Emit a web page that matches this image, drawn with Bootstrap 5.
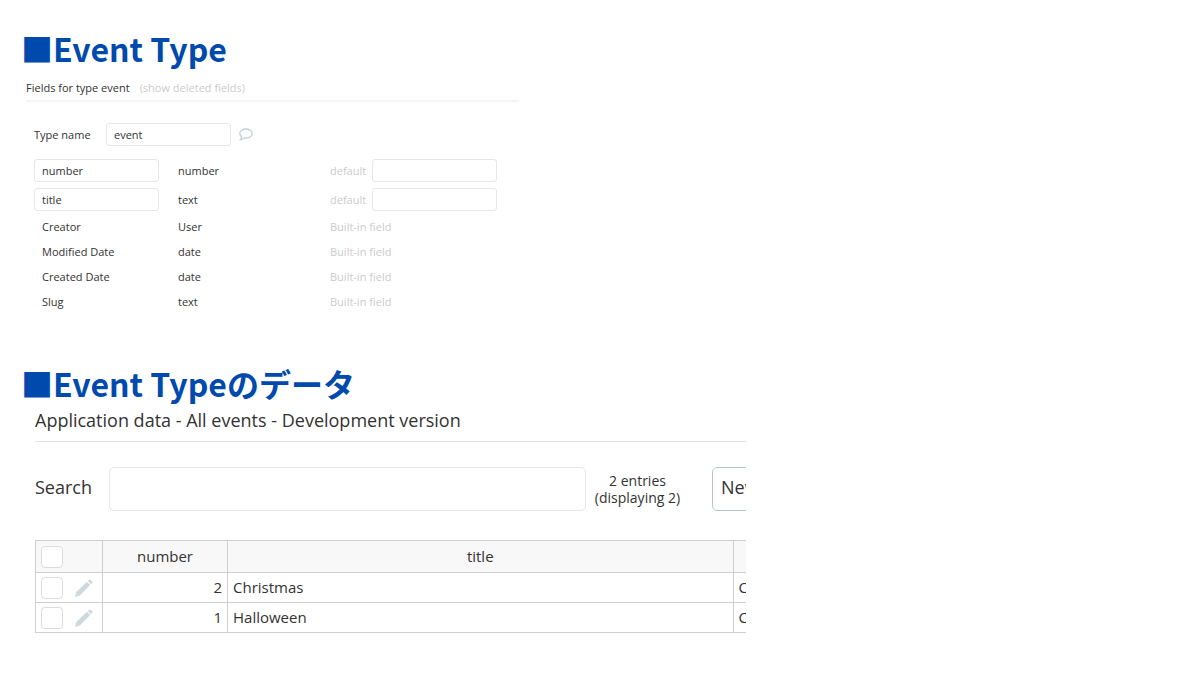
<!DOCTYPE html>
<html lang="ja">
<head>
<meta charset="utf-8">
<meta name="viewport" content="width=device-width, initial-scale=1">
<title>Event Type</title>
<link href="https://cdn.jsdelivr.net/npm/bootstrap@5.3.0/dist/css/bootstrap.min.css" rel="stylesheet">
<style>
  body { font-family: "Open Sans", "Noto Sans CJK JP", sans-serif; font-size: 11px; line-height: 16px; color: #333; background: #fff; }
  .page { padding: 25px 20px 40px 21px; }
  .section-title { font-family: "Noto Sans CJK JP", sans-serif; font-weight: 700; font-size: 32px; line-height: 46px; color: #004aad; }

  .type-panel { max-width: 493px; margin-left: 5px; }
  .type-head { padding: 9px 0 4px; border-bottom: 2px solid #f4f4f4; gap: 10px; }
  .type-body { padding: 21px 22px 0 8px; }
  .faded, .faded:hover { color: #cbcbcb; text-decoration: none; }
  .box { border: 1px solid #e6e6e6; border-radius: 3px; color: #333; background: #fff; }
  .box-sm { width: 125px; height: 23px; padding: 0 7px; font-size: 11px; line-height: 16px; }
  .name-label { width: 72px; }
  .fields { width: 100%; margin-top: 10px; table-layout: fixed; }
  .fields td { height: 25px; padding: 0; vertical-align: middle; }
  .fields .editable td { height: 29px; }
  .fields .fixed-name { padding-left: 8px; }
  .col-field { width: 144px; }
  .col-type { width: 152px; }

  .data-section { margin-top: 46px; }
  .data-panel { max-width: 711px; margin-left: 14px; padding-top: 2px; overflow: hidden; font-size: 15px; line-height: 17px; }
  .data-title { font-size: 18px; line-height: 24px; padding-bottom: 9px; border-bottom: 1px solid #e2e2e2; }
  .search-row { padding: 25px 0 29px; }
  .search-label { font-size: 18px; width: 74px; line-height: 24px; padding-bottom: 4px; }
  .search-box { height: 44px; flex: 1 1 0; min-width: 0; border-radius: 5px; }
  .entry-count { width: 103px; margin-right: 23px; font-size: 14px; }
  .new-clip { width: 34px; overflow: hidden; }
  .new-btn { width: 80px; height: 44px; padding: 0 8px 4px; font-size: 18px; text-align: left; border: 1px solid #b9c5cb; border-radius: 5px; background: #fff; color: #333; }
  .entries { width: 100%; table-layout: fixed; border-collapse: collapse; }
  .entries th, .entries td { height: 30px; padding: 0 5px; border: 1px solid #cfcfcf; font-weight: 400; vertical-align: middle; }
  .entries th { height: 32px; background: #f8f8f8; text-align: center; }
  .entries th:last-child, .entries td:last-child { border-right: 0; overflow: hidden; }
  .col-tools { width: 67px; }
  .col-number { width: 125px; }
  .col-cut { width: 13px; }
  .tick { appearance: none; display: block; width: 22px; height: 22px; margin: 0; border: 1px solid #dcdcdc; border-radius: 4px; background: #fff; }
</style>
</head>
<body>
<main class="page">
  <section>
    <h1 class="section-title mb-0">■Event Type</h1>
    <div class="type-panel">
      <div class="type-head d-flex"><span>Fields for type event</span><a href="#" class="faded">(show deleted fields)</a></div>
      <div class="type-body">
        <div class="d-flex align-items-center">
          <label for="type-name" class="name-label">Type name</label>
          <input id="type-name" class="box box-sm" type="text" value="event">
          <svg class="ms-2" width="14" height="13" viewBox="0 0 14 13" fill="none" stroke="#c3d0d6" stroke-width="1.3" role="img" aria-label="Comment"><path d="M7 1C3.500 1 .8 2.900.8 5.500c0 1.500.8 2.600 1.900 3.400C2.600 10 2.100 11 1.300 11.900c1.700-.2 3-.9 3.900-2 4.500.6 8-1.400 8-4.400C13.200 2.900 10.500 1 7 1z"/></svg>
        </div>
        <table class="fields">
          <colgroup><col class="col-field"><col class="col-type"><col></colgroup>
          <tbody>
            <tr class="editable"><td><input class="box box-sm" type="text" value="number" aria-label="Field name"></td><td>number</td><td><div class="d-flex align-items-center justify-content-between faded"><label for="default-number">default</label><input id="default-number" class="box box-sm" type="text"></div></td></tr>
            <tr class="editable"><td><input class="box box-sm" type="text" value="title" aria-label="Field name"></td><td>text</td><td><div class="d-flex align-items-center justify-content-between faded"><label for="default-title">default</label><input id="default-title" class="box box-sm" type="text"></div></td></tr>
            <tr><td class="fixed-name">Creator</td><td>User</td><td class="faded">Built-in field</td></tr>
            <tr><td class="fixed-name">Modified Date</td><td>date</td><td class="faded">Built-in field</td></tr>
            <tr><td class="fixed-name">Created Date</td><td>date</td><td class="faded">Built-in field</td></tr>
            <tr><td class="fixed-name">Slug</td><td>text</td><td class="faded">Built-in field</td></tr>
          </tbody>
        </table>
      </div>
    </div>
  </section>

  <section class="data-section">
    <h1 class="section-title mb-0">■Event Typeのデータ</h1>
    <div class="data-panel">
      <h2 class="data-title fw-normal mb-0">Application data - All events - Development version</h2>
      <div class="search-row d-flex align-items-center">
        <label for="search" class="search-label">Search</label>
        <input id="search" class="box search-box" type="text">
        <div class="entry-count text-center">2 entries<br>(displaying 2)</div>
        <div class="new-clip"><button type="button" class="new-btn">New</button></div>
      </div>
      <table class="entries">
        <colgroup><col class="col-tools"><col class="col-number"><col><col class="col-cut"></colgroup>
        <thead>
          <tr><th><input class="tick" type="checkbox" aria-label="Select all"></th><th>number</th><th>title</th><th></th></tr>
        </thead>
        <tbody>
          <tr><td><div class="d-flex align-items-center justify-content-between"><input class="tick" type="checkbox" aria-label="Select Christmas"><svg class="me-1" width="18" height="18" viewBox="0 0 18 18" fill="#cfd8dc" role="img" aria-label="Edit"><path d="M0 18l1.300-5L12 2.800l3.200 3.200L4.800 16.500z"/><path d="M12.700 2.100l1.200-1.200a1.300 1.300 0 0 1 1.800 0l1.400 1.400a1.300 1.300 0 0 1 0 1.800L15.900 5.300z"/></svg></div></td><td class="text-end">2</td><td>Christmas</td><td>C</td></tr>
          <tr><td><div class="d-flex align-items-center justify-content-between"><input class="tick" type="checkbox" aria-label="Select Halloween"><svg class="me-1" width="18" height="18" viewBox="0 0 18 18" fill="#cfd8dc" role="img" aria-label="Edit"><path d="M0 18l1.300-5L12 2.800l3.200 3.200L4.800 16.500z"/><path d="M12.700 2.100l1.200-1.200a1.300 1.300 0 0 1 1.800 0l1.400 1.400a1.300 1.300 0 0 1 0 1.800L15.900 5.300z"/></svg></div></td><td class="text-end">1</td><td>Halloween</td><td>C</td></tr>
        </tbody>
      </table>
    </div>
  </section>
</main>
<script src="https://cdn.jsdelivr.net/npm/bootstrap@5.3.0/dist/js/bootstrap.bundle.min.js"></script>
</body>
</html>
